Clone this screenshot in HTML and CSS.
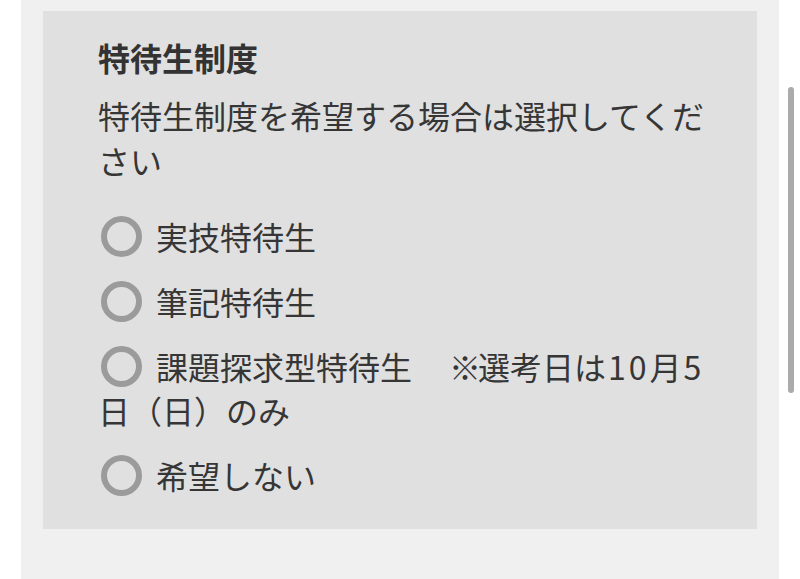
FILE: index.html
```html
<!DOCTYPE html>
<html lang="ja">
<head>
<meta charset="utf-8">
<title>特待生制度</title>
<link rel="stylesheet" href="styles.css">
</head>
<body>
<div class="page">
  <section class="card">
    <h2 class="title">特待生制度</h2>
    <p class="desc">特待生制度を希望する場合は選択してください</p>
    <ul class="options">
      <li class="option"><span class="radio"></span>実技特待生</li>
      <li class="option"><span class="radio"></span>筆記特待生</li>
      <li class="option"><span class="radio"></span>課題探求型特待生　<span class="note">※</span>選考日は<span class="num">10</span>月<span class="num">5</span>日（日）のみ</li>
      <li class="option"><span class="radio"></span>希望しない</li>
    </ul>
  </section>
</div>
<div class="scrollbar"></div>
</body>
</html>
```

FILE: styles.css
```css
html, body {
  margin: 0;
  padding: 0;
  background: #ffffff;
  height: 100%;
  overflow: hidden;
}
body {
  font-family: "Noto Sans CJK JP", "Noto Sans", sans-serif;
  color: #363636;
}
.page {
  margin: 0 21px;
  background: #f0f0f0;
  min-height: 100vh;
  padding: 11px 22px 0;
  box-sizing: border-box;
}
.card {
  background: #e0e0e0;
  padding: 24px 37px 32px 55px;
}
.title {
  margin: 0;
  font-size: 32px;
  line-height: 44px;
  font-weight: 700;
  color: #333;
}
.desc {
  margin: 14px 0 0;
  font-size: 32px;
  line-height: 45px;
}
.options {
  list-style: none;
  margin: 31px 0 0;
  padding: 0;
  display: flex;
  flex-direction: column;
  gap: 21px;
}
.option {
  font-size: 32px;
  line-height: 44px;
}
.note {
  padding-left: 5px;
  margin-right: -3px;
}
.num {
  letter-spacing: 3px;
  padding-left: 2px;
}
.radio {
  display: inline-block;
  vertical-align: top;
  box-sizing: border-box;
  width: 41px;
  height: 41px;
  margin: 2px 14px 1px 3px;
  border: 6px solid #9b9b9b;
  border-radius: 50%;
}
.scrollbar {
  position: fixed;
  left: 788px;
  top: 87px;
  width: 6px;
  height: 306px;
  border-radius: 3px;
  background: #ababab;
}
```
